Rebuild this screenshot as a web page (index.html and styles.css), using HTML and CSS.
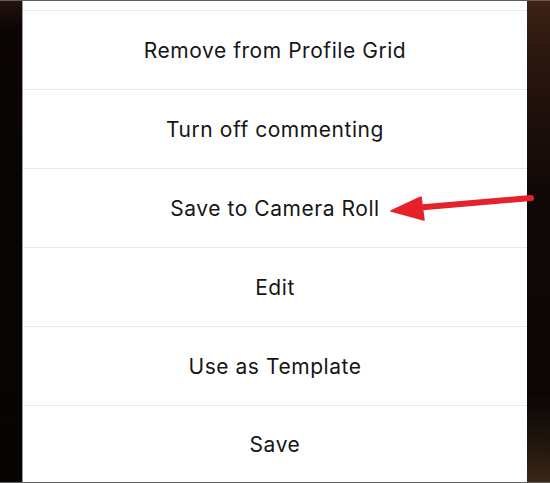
FILE: index.html
```html
<!DOCTYPE html>
<html>
<head>
<meta charset="utf-8">
<link rel="stylesheet" href="styles.css">
</head>
<body>
<div class="frame">
  <div class="side side-left"></div>
  <div class="sheet">
    <div class="top-gap"></div>
    <div class="row">Remove from Profile Grid</div>
    <div class="row">Turn off commenting</div>
    <div class="row">Save to Camera Roll</div>
    <div class="row">Edit</div>
    <div class="row">Use as Template</div>
    <div class="row row-last">Save</div>
  </div>
  <div class="side side-right"></div>
  <svg class="arrow" width="550" height="483" viewBox="0 0 550 483">
    <line x1="531" y1="198" x2="414" y2="208" stroke="#e5212a" stroke-width="6" stroke-linecap="round"/>
    <polygon points="391,211 421,197 424,220" fill="#e5212a" stroke="#e5212a" stroke-width="1.5" stroke-linejoin="round"/>
  </svg>
</div>
</body>
</html>
```

FILE: styles.css
```css
html, body {
  margin: 0;
  padding: 0;
}
body {
  width: 550px;
  height: 483px;
  overflow: hidden;
  background: #0b0606;
  font-family: Inter, "Liberation Sans", Arial, sans-serif;
}
.frame {
  position: relative;
  width: 550px;
  height: 483px;
  box-sizing: border-box;
  border-top: 1px solid #5e5e5e;
  border-bottom: 1px solid #5e5e5e;
  display: grid;
  grid-template-columns: 22px 505px 23px;
}
.side-left {
  background: linear-gradient(180deg, #241210 0%, #0b0505 6%, #080404 100%);
}
.side-right {
  background: linear-gradient(180deg, #3e2316 0%, #2a160f 12%, #100806 40%, #0b0605 82%, #24170f 93%, #3a2719 100%);
}
.sheet {
  background: #ffffff;
  border-left: 1px solid #9a9a9a;
  display: flex;
  flex-direction: column;
}
.top-gap {
  height: 9px;
}
.row {
  height: 78px;
  border-top: 1px solid #e8e8e8;
  display: flex;
  align-items: center;
  justify-content: center;
  font-size: 21px;
  letter-spacing: 0.55px;
  color: #161616;
}
.row-last {
  flex: 1;
  height: auto;
}
.arrow {
  position: absolute;
  left: 0;
  top: -1px;
  pointer-events: none;
}
```
